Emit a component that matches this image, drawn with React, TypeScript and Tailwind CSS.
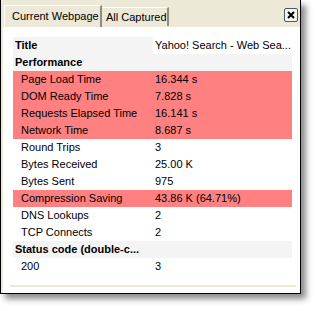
import React from "react";

type Row = {
  label: string;
  value?: string;
  kind: "header" | "title" | "item";
  hot?: boolean;
};

const rows: Row[] = [
  { label: "Title", value: "Yahoo! Search - Web Sea...", kind: "title" },
  { label: "Performance", kind: "header" },
  { label: "Page Load Time", value: "16.344 s", kind: "item", hot: true },
  { label: "DOM Ready Time", value: "7.828 s", kind: "item", hot: true },
  { label: "Requests Elapsed Time", value: "16.141 s", kind: "item", hot: true },
  { label: "Network Time", value: "8.687 s", kind: "item", hot: true },
  { label: "Round Trips", value: "3", kind: "item" },
  { label: "Bytes Received", value: "25.00 K", kind: "item" },
  { label: "Bytes Sent", value: "975", kind: "item" },
  { label: "Compression Saving", value: "43.86 K (64.71%)", kind: "item", hot: true },
  { label: "DNS Lookups", value: "2", kind: "item" },
  { label: "TCP Connects", value: "2", kind: "item" },
  { label: "Status code (double-c...", kind: "header" },
  { label: "200", value: "3", kind: "item" },
];

function StatRow({ row }: { row: Row }) {
  if (row.kind === "header") {
    return (
      <div className="flex h-[17px] items-center bg-[#f4f4f4] pl-[2px] font-bold">
        {row.label}
      </div>
    );
  }
  if (row.kind === "title") {
    return (
      <div className="flex h-[17px]">
        <div className="flex w-[140px] items-center bg-[#f4f4f4] pl-[2px] font-bold">{row.label}</div>
        <div className="flex flex-1 items-center whitespace-nowrap pl-[2px]">{row.value}</div>
      </div>
    );
  }
  return (
    <div className={`flex h-[17px] items-center ${row.hot ? "bg-[#ff8080]" : ""}`}>
      <div className="w-[140px] whitespace-nowrap pl-[8px]">{row.label}</div>
      <div className="flex-1 whitespace-nowrap pl-[2px]">{row.value}</div>
    </div>
  );
}

export default function App() {
  return (
    <div className="h-[311px] w-[317px] bg-white font-['Liberation_Sans',Arial,sans-serif] text-[11px] text-black">
      <div className="flex h-[294px] w-[301px] flex-col border-x border-b border-black bg-[#ece9d8] shadow-[5px_5px_6px_rgba(0,0,0,0.45)]">
        <div className="flex h-[27px] items-end pl-[3px] pr-[2px]">
          <div className="flex h-[22px] w-[98px] shrink-0 items-center whitespace-nowrap border-l border-t border-white border-r-2 border-r-[#8f8c80] pl-[7px] text-[11px]">
            Current Webpage
          </div>
          <div className="mb-[1px] flex h-[19px] w-[67px] shrink-0 items-center whitespace-nowrap border-t border-white border-r-2 border-r-[#8f8c80] pl-[4px] text-[11px]">
            All Captured
          </div>
          <button
            type="button"
            className="mb-auto ml-auto mt-[8px] flex h-[14px] w-[14px] shrink-0 items-center justify-center rounded-[2px] border border-[#4d5a66] bg-[#f7f6f1]"
          >
            <svg width="8" height="8" viewBox="0 0 8 8">
              <path d="M1 1 L7 7 M7 1 L1 7" stroke="#000" strokeWidth="2" />
            </svg>
          </button>
        </div>
        <div className="ml-[2px] flex flex-1 flex-col bg-white pt-[10px]">
          <div className="ml-[10px] w-[279px]">
            {rows.map((r) => (
              <StatRow key={r.label} row={r} />
            ))}
          </div>
          <div className="ml-[7px] mt-[10px] h-[2px] w-[286px] bg-[#ece9d8]" />
        </div>
      </div>
    </div>
  );
}
